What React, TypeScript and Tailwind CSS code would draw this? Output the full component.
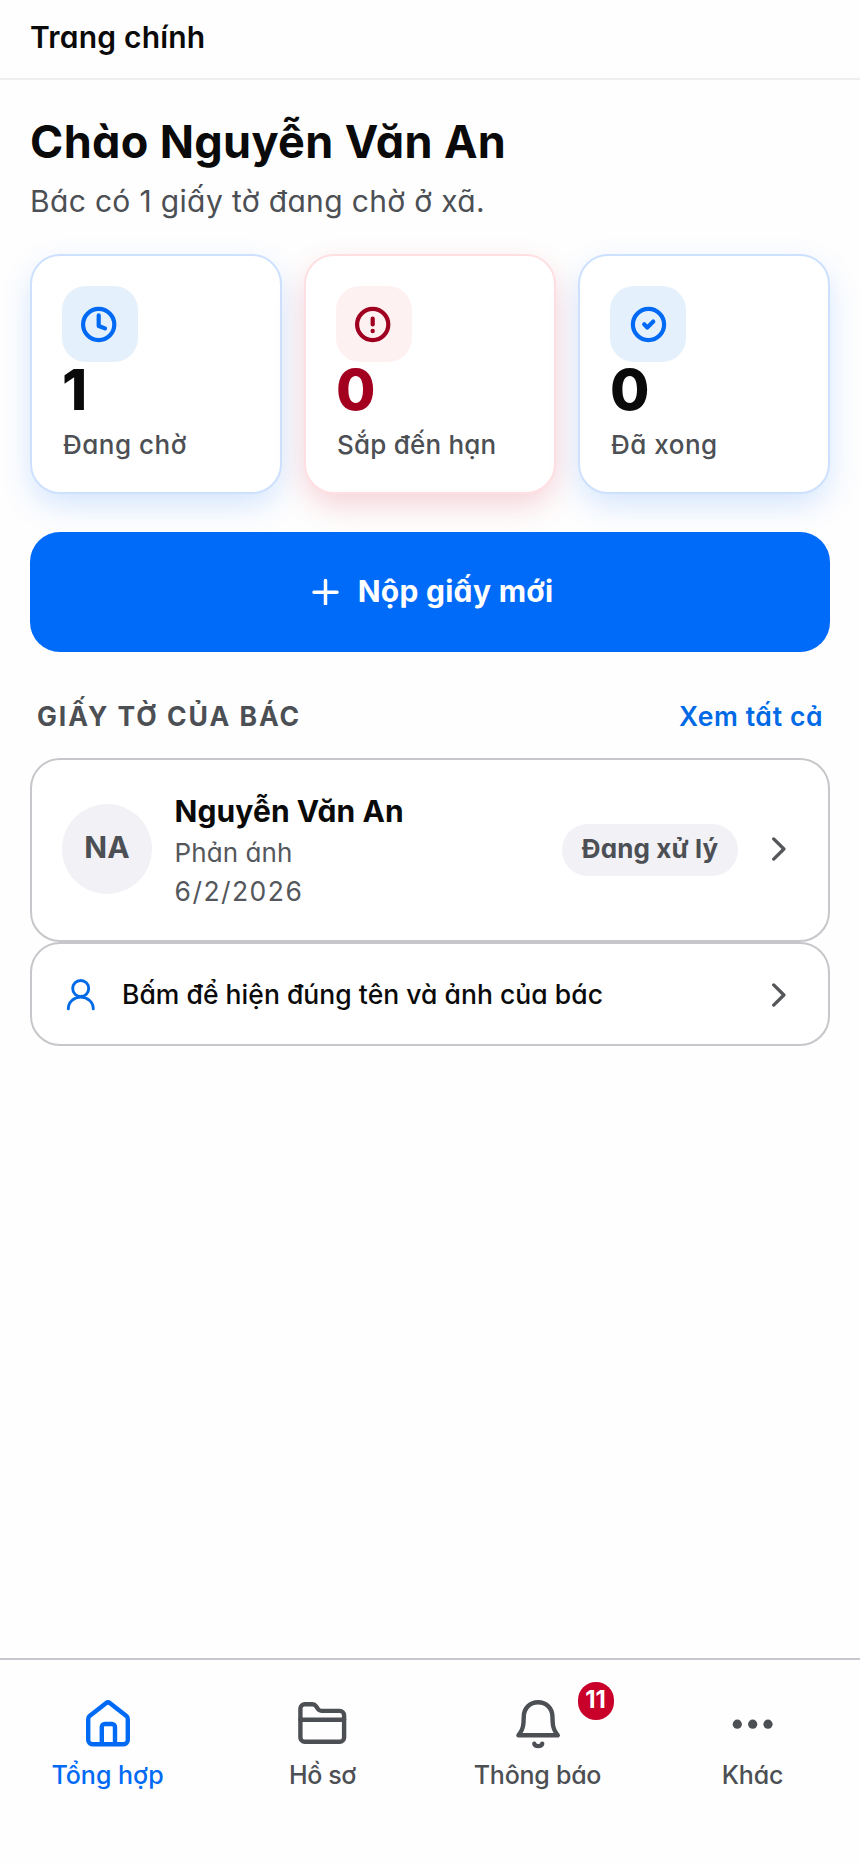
import type { ReactNode } from 'react';

type Stat = {
  label: string;
  value: number;
  icon: ReactNode;
  card: string;
  iconBox: string;
  number: string;
  tracking: string;
};

const stats: Stat[] = [
  {
    label: 'Đang chờ',
    value: 1,
    icon: (
      <>
        <circle cx="36.7" cy="38.5" r="15.6" />
        <path d="M36.7 29.3V40L43 42.4" />
      </>
    ),
    card: 'border-[#cde1ff] shadow-[0_12px_32px_-2px_rgba(0,106,249,0.18)]',
    iconBox: 'bg-[#e4f1fd] text-[#006af5]',
    number: 'text-[#0a0a0a]',
    tracking: 'tracking-[0.5px]',
  },
  {
    label: 'Sắp đến hạn',
    value: 0,
    icon: (
      <>
        <circle cx="36.7" cy="38.5" r="15.6" />
        <path d="M36.7 32.5V38.4" />
        <circle cx="36.7" cy="45" r="2.2" fill="currentColor" stroke="none" />
      </>
    ),
    card: 'border-[#ffdfe1] shadow-[0_12px_32px_-2px_rgba(200,0,42,0.19)]',
    iconBox: 'bg-[#fef1f2] text-[#a00020]',
    number: 'text-[#a30020]',
    tracking: 'tracking-[0.2px]',
  },
  {
    label: 'Đã xong',
    value: 0,
    icon: (
      <>
        <circle cx="38.5" cy="38.5" r="15.6" />
        <path d="M34.2 38.3L37.3 41.5L43.3 35.6" />
      </>
    ),
    card: 'border-[#cde1ff] shadow-[0_12px_32px_-2px_rgba(0,106,249,0.18)]',
    iconBox: 'bg-[#e4f1fd] text-[#006af5]',
    number: 'text-[#0a0a0a]',
    tracking: 'tracking-[0.5px]',
  },
];

const tabs = [
  {
    label: 'Tổng hợp',
    active: true,
    badge: 0,
    tracking: 'tracking-normal',
    icon: (
      <>
        <path d="M4.2 19c0-1.2.5-2.2 1.4-2.9L21.9 3.2a3.4 3.4 0 0 1 4.2 0L42.4 16.1c.9.7 1.4 1.7 1.4 2.9V40a4.2 4.2 0 0 1-4.2 4.2H8.4A4.2 4.2 0 0 1 4.2 40Z" />
        <path d="M17.8 44V27a3 3 0 0 1 3-3h7.2a3 3 0 0 1 3 3v17" />
      </>
    ),
  },
  {
    label: 'Hồ sơ',
    active: false,
    badge: 0,
    tracking: 'tracking-[-0.4px]',
    icon: (
      <>
        <path d="M1.4 8.6A4.4 4.4 0 0 1 5.8 4.2H13.4c1.5 0 2.8.7 3.6 1.9l2 3c.8 1.2 2 1.8 3.4 1.8H40.7a4.4 4.4 0 0 1 4.4 4.4V37.4A4.4 4.4 0 0 1 40.7 41.8H5.8A4.4 4.4 0 0 1 1.4 37.4Z" />
        <path d="M1.4 19.7H45.1" />
      </>
    ),
  },
  {
    label: 'Thông báo',
    active: false,
    badge: 11,
    tracking: 'tracking-[-0.25px]',
    icon: (
      <>
        <path d="M4.4 35.3C7.6 31.5 9.3 27.5 9.5 22.5L9.8 16C10.2 8 16 2.2 24.1 2.2S38 8 38.4 16L38.7 22.5C38.9 27.5 40.6 31.5 43.8 35.3Z" />
        <path d="M20.3 43.7c.8 3.2 7.1 3.2 7.9 0" />
      </>
    ),
  },
  {
    label: 'Khác',
    active: false,
    badge: 0,
    tracking: 'tracking-[-0.1px]',
    icon: (
      <g fill="currentColor" stroke="none">
        <circle cx="8.3" cy="24.2" r="4.6" />
        <circle cx="23.7" cy="24.2" r="4.6" />
        <circle cx="39" cy="24.2" r="4.6" />
      </g>
    ),
  },
];

function Chevron() {
  return (
    <svg
      className="h-6 w-4 shrink-0 text-[#54565a]"
      viewBox="0 0 16 24"
      fill="none"
      stroke="currentColor"
      strokeWidth="3.3"
      strokeLinecap="round"
      strokeLinejoin="round"
    >
      <path d="M2.7 1.9L12.9 12L2.7 22.1" />
    </svg>
  );
}

function StatCard({ stat }: { stat: Stat }) {
  return (
    <article className={`h-60 rounded-[30px] border-2 bg-white p-[30px] ${stat.card}`}>
      <div className={`size-[76px] rounded-3xl ${stat.iconBox}`}>
        <svg
          className="size-[76px]"
          viewBox="0 0 76 76"
          fill="none"
          stroke="currentColor"
          strokeWidth="4.2"
          strokeLinecap="round"
          strokeLinejoin="round"
        >
          {stat.icon}
        </svg>
      </div>
      <p className={`pt-px text-[57px] leading-[54px] font-extrabold ${stat.number}`}>{stat.value}</p>
      <p
        className={`mt-[10px] pl-px text-[26px] leading-9 font-medium whitespace-nowrap text-[#4c4f54] ${stat.tracking}`}
      >
        {stat.label}
      </p>
    </article>
  );
}

function App() {
  return (
    <div className="flex h-[1864px] w-[860px] flex-col bg-[#fefefe] font-['Inter','Noto_Sans',sans-serif] text-[#0a0a0a] [font-feature-settings:'cv11']">
      <header className="h-20 border-b-2 border-[#eeeeef] px-[30px]">
        <p className="text-[30px] leading-[75px] font-semibold tracking-[0.2px]">Trang chính</p>
      </header>

      <main className="flex-1 px-[30px] pt-[34px]">
        <h1 className="text-[45px] leading-[56px] font-bold tracking-[0.35px]">Chào Nguyễn Văn An</h1>
        <p className="mt-[9px] text-[30px] leading-[44px] tracking-[0.33px] text-[#4c4f54]">
          Bác có 1 giấy tờ đang chờ ở xã.
        </p>

        <section className="mt-[31px] grid grid-cols-3 gap-[22px]">
          {stats.map((stat) => (
            <StatCard key={stat.label} stat={stat} />
          ))}
        </section>

        {/* z-order keeps the button above the card shadows */}
        <button className="relative mt-[38px] flex h-[120px] w-full items-center justify-center gap-[19px] rounded-[30px] bg-[#006af9] pb-0.5 pl-1 text-[30px] font-bold text-white">
          <svg
            className="size-7"
            viewBox="0 0 28 28"
            fill="none"
            stroke="currentColor"
            strokeWidth="3.5"
            strokeLinecap="round"
          >
            <path d="M14.5 3.5V27M3 15.2H26" />
          </svg>
          <span className="tracking-[0.25px]">Nộp giấy mới</span>
        </button>

        <div className="mt-11 flex items-center justify-between px-[7px] leading-10">
          <h2 className="text-[26.5px] font-bold tracking-[1.95px] text-[#4c4f54]">GIẤY TỜ CỦA BÁC</h2>
          <a className="text-[26.5px] font-semibold tracking-[0.55px] text-[#006ae6]">Xem tất cả</a>
        </div>

        <article className="mt-[22px] flex h-[184px] items-center rounded-[30px] border-2 border-[#c7c7cb] bg-white px-[30px] pb-0.5">
          <div className="flex size-[90px] shrink-0 items-center justify-center rounded-full bg-[#f1f1f6] pb-[3px] text-[30px] font-bold text-[#4c4f54]">
            NA
          </div>
          <div className="ml-[22.5px] flex-1">
            <h3 className="text-[30px] leading-[44px] font-bold tracking-[0.1px]">Nguyễn Văn An</h3>
            <p className="pt-px text-[26px] leading-[38px] tracking-[0.1px] text-[#54575c]">Phản ánh</p>
            <p className="-mb-px text-[26.5px] leading-[38px] tracking-[1.45px] text-[#54575c]">6/2/2026</p>
          </div>
          <div className="mt-0.5 flex h-[52px] w-44 items-center justify-center rounded-full bg-[#f1f1f6] pb-[3px]">
            <span className="text-[26px] font-bold tracking-[0.1px] whitespace-nowrap text-[#4c4f54]">Đang xử lý</span>
          </div>
          <div className="mr-[11px] ml-[33px]">
            <Chevron />
          </div>
        </article>

        <article className="flex h-[104px] items-center rounded-[30px] border-2 border-[#c7c7cb] bg-white px-[30px] pt-px">
          <svg
            className="ml-1 h-9 w-8 text-[#006ae6]"
            viewBox="0 0 32 36"
            fill="none"
            stroke="currentColor"
            strokeWidth="2.9"
            strokeLinecap="round"
          >
            <circle cx="14.7" cy="11.5" r="8" />
            <path d="M2.3 31.9C2.3 25.1 7.8 20.1 14.7 20.1S27.3 25.1 27.3 31.9" />
          </svg>
          <p className="ml-6 flex-1 text-[26.5px] font-medium tracking-[0.03px]">
            Bấm để hiện đúng tên và ảnh của bác
          </p>
          <div className="mr-[11px]">
            <Chevron />
          </div>
        </article>
      </main>

      <nav className="grid h-[206px] grid-cols-4 border-t-2 border-[#c7c7cf] pt-10">
        {tabs.map((tab) => (
          <a
            key={tab.label}
            className={`flex flex-col items-center ${tab.active ? 'text-[#006af5]' : 'text-[#4c4f54]'}`}
          >
            <div className="relative size-12">
              <svg
                className="size-12 overflow-visible"
                viewBox="0 0 48 48"
                fill="none"
                stroke="currentColor"
                strokeWidth="4.4"
                strokeLinecap="round"
                strokeLinejoin="round"
              >
                {tab.icon}
              </svg>
              {tab.badge > 0 && (
                <span className="absolute -top-[18px] left-16 flex h-[38px] w-9 items-center justify-center rounded-full bg-[#c8002a] pb-[3px] text-[24px] font-bold text-white">
                  {tab.badge}
                </span>
              )}
            </div>
            <span className={`mt-[9px] text-[25px] leading-9 font-medium ${tab.tracking}`}>{tab.label}</span>
          </a>
        ))}
      </nav>
    </div>
  );
}

export default App;
